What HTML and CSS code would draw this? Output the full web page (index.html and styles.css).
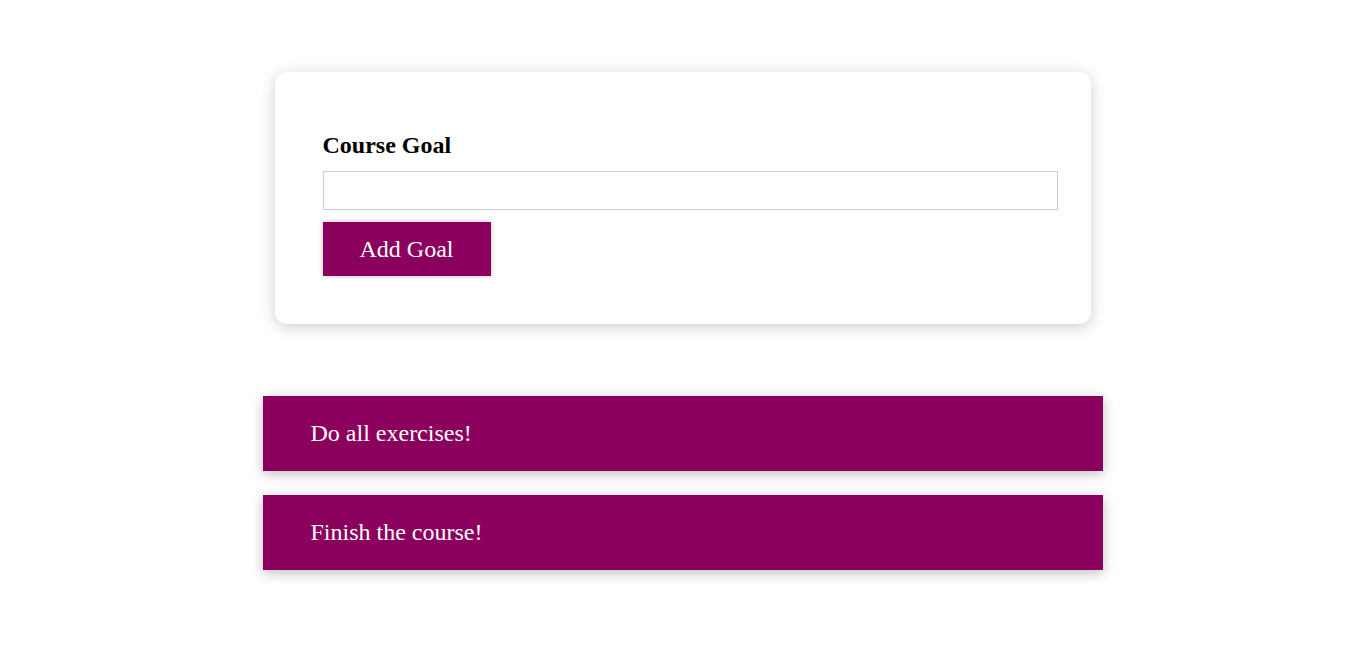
FILE: index.html
```html
<!DOCTYPE html>
<html>
<head>
<meta charset="utf-8">
<link rel="stylesheet" href="styles.css">
</head>
<body>
<section class="goal-form">
  <form class="form">
    <div class="form-control">
      <label class="label">Course Goal</label>
      <input class="input" type="text">
    </div>
    <button class="button" type="button">Add Goal</button>
  </form>
</section>
<section class="goals">
  <ul class="goal-list">
    <li class="goal-item">Do all exercises!</li>
    <li class="goal-item">Finish the course!</li>
  </ul>
</section>
</body>
</html>
```
FILE: styles.css
```css
* { box-sizing: border-box; }
html, body { margin: 0; padding: 0; background: #fff; }
body {
  font-family: "Liberation Serif", "Times New Roman", serif;
  min-height: 100vh;
  padding-bottom: 48px;
}

.goal-form {
  width: 816px;
  margin: 72px auto 0;
  padding: 60px 33px 48px 48px;
  background: #fff;
  border-radius: 12px;
  box-shadow: 0 3px 16px rgba(0, 0, 0, 0.2);
}
.form { margin: 0; }
.form-control { margin-bottom: 12px; }
.label {
  display: block;
  font-weight: bold;
  font-size: 24px;
  line-height: 27px;
  margin-bottom: 12px;
  color: #000;
}
.input {
  display: block;
  width: 100%;
  height: 39px;
  border: 1px solid #ccc;
  font: inherit;
  padding: 0 4px;
  margin: 0;
  outline: none;
}
.button {
  display: block;
  width: 168px;
  height: 54px;
  padding: 0;
  border: 1px solid #8b005d;
  background: #8b005d;
  color: #fff;
  font-family: inherit;
  font-size: 24px;
  box-shadow: 0 0 5px rgba(0, 0, 0, 0.26);
  cursor: pointer;
}
.goals {
  width: 840px;
  margin: 72px auto 0;
}
.goal-list {
  list-style: none;
  margin: 0;
  padding: 0;
  display: flex;
  flex-direction: column;
  gap: 24px;
}
.goal-item {
  height: 75px;
  display: flex;
  align-items: center;
  padding: 0 48px;
  background: #8b005d;
  color: #fff;
  font-size: 24px;
  box-shadow: 0 3px 12px rgba(0, 0, 0, 0.26);
}
```
